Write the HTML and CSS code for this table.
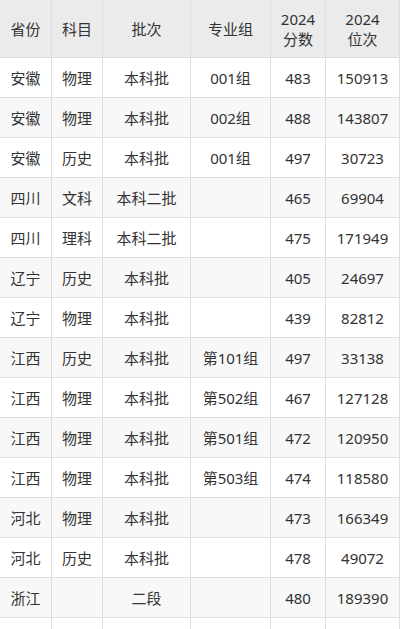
FILE: index.html
```html
<!DOCTYPE html>
<html lang="zh">
<head>
<meta charset="utf-8">
<link rel="stylesheet" href="styles.css">
</head>
<body>
<table class="score-table">
  <colgroup>
    <col class="c1"><col class="c2"><col class="c3"><col class="c4"><col class="c5"><col class="c6">
  </colgroup>
  <thead>
    <tr>
      <th>省份</th><th>科目</th><th>批次</th><th>专业组</th><th>2024<br>分数</th><th>2024<br>位次</th>
    </tr>
  </thead>
  <tbody>
    <tr><td>安徽</td><td>物理</td><td>本科批</td><td>001组</td><td>483</td><td>150913</td></tr>
    <tr><td>安徽</td><td>物理</td><td>本科批</td><td>002组</td><td>488</td><td>143807</td></tr>
    <tr><td>安徽</td><td>历史</td><td>本科批</td><td>001组</td><td>497</td><td>30723</td></tr>
    <tr><td>四川</td><td>文科</td><td>本科二批</td><td></td><td>465</td><td>69904</td></tr>
    <tr><td>四川</td><td>理科</td><td>本科二批</td><td></td><td>475</td><td>171949</td></tr>
    <tr><td>辽宁</td><td>历史</td><td>本科批</td><td></td><td>405</td><td>24697</td></tr>
    <tr><td>辽宁</td><td>物理</td><td>本科批</td><td></td><td>439</td><td>82812</td></tr>
    <tr><td>江西</td><td>历史</td><td>本科批</td><td>第101组</td><td>497</td><td>33138</td></tr>
    <tr><td>江西</td><td>物理</td><td>本科批</td><td>第502组</td><td>467</td><td>127128</td></tr>
    <tr><td>江西</td><td>物理</td><td>本科批</td><td>第501组</td><td>472</td><td>120950</td></tr>
    <tr><td>江西</td><td>物理</td><td>本科批</td><td>第503组</td><td>474</td><td>118580</td></tr>
    <tr><td>河北</td><td>物理</td><td>本科批</td><td></td><td>473</td><td>166349</td></tr>
    <tr><td>河北</td><td>历史</td><td>本科批</td><td></td><td>478</td><td>49072</td></tr>
    <tr><td>浙江</td><td></td><td>二段</td><td></td><td>480</td><td>189390</td></tr>
    <tr><td></td><td></td><td></td><td></td><td></td><td></td></tr>
  </tbody>
</table>
</body>
</html>
```
FILE: styles.css
```css
html, body {
  margin: 0;
  padding: 0;
  background: #ffffff;
}
body {
  font-family: "Noto Sans", "Noto Sans CJK SC", sans-serif;
  color: #333333;
  font-size: 15px;
  overflow: hidden;
}
.score-table {
  border-collapse: separate;
  border-spacing: 0;
  table-layout: fixed;
  width: 400px;
}
.c1 { width: 52px; }
.c2 { width: 51px; }
.c3 { width: 88px; }
.c4 { width: 80px; }
.c5 { width: 55px; }
.c6 { width: 74px; }
.score-table th,
.score-table td {
  border-right: 1px solid #dedede;
  border-bottom: 1px solid #dedede;
  text-align: center;
  vertical-align: middle;
  padding: 0;
  box-sizing: border-box;
  white-space: nowrap;
}
.score-table th {
  background: #ebebeb;
  font-weight: normal;
  height: 58px;
  line-height: 20px;
}
.score-table td {
  height: 40px;
  line-height: 20px;
}
.score-table tbody tr:nth-child(even) td {
  background: #f8f8f8;
}
```
